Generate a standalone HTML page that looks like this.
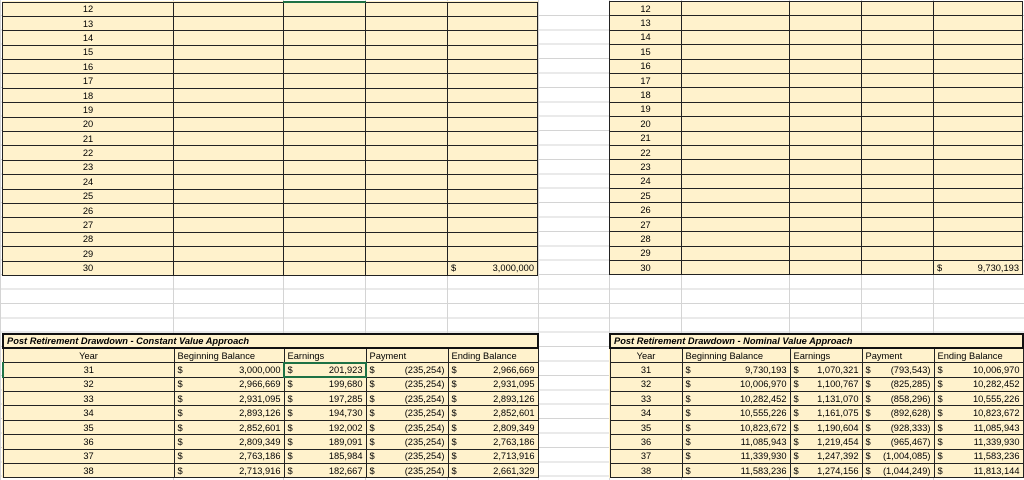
<!DOCTYPE html>
<html><head><meta charset="utf-8"><style>
*{margin:0;padding:0;box-sizing:border-box}
body{width:1024px;height:480px;overflow:hidden;background:#fff;position:relative;font-family:"Liberation Sans",sans-serif;font-size:9.3px;color:#000;
background-image:repeating-linear-gradient(to bottom,transparent 0,transparent 13.4px,#d4d4d4 13.4px,#d4d4d4 14.4px);background-position:0 1.5px}
.v{position:absolute;top:0;height:480px;width:1px;background:#d4d4d4}
table{position:absolute;border-collapse:collapse;table-layout:fixed;background:#fff2cc}
td{border:1px solid #222;height:14.4px;padding:0 3px;white-space:nowrap;overflow:hidden;line-height:12px}
td.c{text-align:center}
.m{display:flex;justify-content:space-between}
.t td{border:2px solid #111;font-weight:bold;font-style:italic;padding-left:3px}
.sel{outline:2px solid #1e7145;outline-offset:-1px}
</style></head><body>
<div class="v" style="left:0"></div>
<div class="v" style="left:538px"></div>
<div class="v" style="left:609px"></div>
<div class="v" style="left:173px"></div><div class="v" style="left:283px"></div><div class="v" style="left:365px"></div><div class="v" style="left:447px"></div>
<div class="v" style="left:681px"></div><div class="v" style="left:789px"></div><div class="v" style="left:861px"></div><div class="v" style="left:933px"></div>

<table style="left:2px;top:1px;width:535px">
<colgroup><col style="width:171px"><col style="width:110px"><col style="width:82px"><col style="width:82px"><col style="width:90px"></colgroup>
<tr><td class="c">12</td><td></td><td style="border-top:2px solid #1e7145"></td><td></td><td></td></tr>
<tr><td class="c">13</td><td></td><td></td><td></td><td></td></tr>
<tr><td class="c">14</td><td></td><td></td><td></td><td></td></tr>
<tr><td class="c">15</td><td></td><td></td><td></td><td></td></tr>
<tr><td class="c">16</td><td></td><td></td><td></td><td></td></tr>
<tr><td class="c">17</td><td></td><td></td><td></td><td></td></tr>
<tr><td class="c">18</td><td></td><td></td><td></td><td></td></tr>
<tr><td class="c">19</td><td></td><td></td><td></td><td></td></tr>
<tr><td class="c">20</td><td></td><td></td><td></td><td></td></tr>
<tr><td class="c">21</td><td></td><td></td><td></td><td></td></tr>
<tr><td class="c">22</td><td></td><td></td><td></td><td></td></tr>
<tr><td class="c">23</td><td></td><td></td><td></td><td></td></tr>
<tr><td class="c">24</td><td></td><td></td><td></td><td></td></tr>
<tr><td class="c">25</td><td></td><td></td><td></td><td></td></tr>
<tr><td class="c">26</td><td></td><td></td><td></td><td></td></tr>
<tr><td class="c">27</td><td></td><td></td><td></td><td></td></tr>
<tr><td class="c">28</td><td></td><td></td><td></td><td></td></tr>
<tr><td class="c">29</td><td></td><td></td><td></td><td></td></tr>
<tr><td class="c">30</td><td></td><td></td><td></td><td><div class="m"><span>$</span><span>3,000,000</span></div></td></tr>
</table>

<table style="left:609px;top:1px;width:413px">
<colgroup><col style="width:72px"><col style="width:108px"><col style="width:72px"><col style="width:72px"><col style="width:89px"></colgroup>
<tr><td class="c">12</td><td></td><td></td><td></td><td></td></tr>
<tr><td class="c">13</td><td></td><td></td><td></td><td></td></tr>
<tr><td class="c">14</td><td></td><td></td><td></td><td></td></tr>
<tr><td class="c">15</td><td></td><td></td><td></td><td></td></tr>
<tr><td class="c">16</td><td></td><td></td><td></td><td></td></tr>
<tr><td class="c">17</td><td></td><td></td><td></td><td></td></tr>
<tr><td class="c">18</td><td></td><td></td><td></td><td></td></tr>
<tr><td class="c">19</td><td></td><td></td><td></td><td></td></tr>
<tr><td class="c">20</td><td></td><td></td><td></td><td></td></tr>
<tr><td class="c">21</td><td></td><td></td><td></td><td></td></tr>
<tr><td class="c">22</td><td></td><td></td><td></td><td></td></tr>
<tr><td class="c">23</td><td></td><td></td><td></td><td></td></tr>
<tr><td class="c">24</td><td></td><td></td><td></td><td></td></tr>
<tr><td class="c">25</td><td></td><td></td><td></td><td></td></tr>
<tr><td class="c">26</td><td></td><td></td><td></td><td></td></tr>
<tr><td class="c">27</td><td></td><td></td><td></td><td></td></tr>
<tr><td class="c">28</td><td></td><td></td><td></td><td></td></tr>
<tr><td class="c">29</td><td></td><td></td><td></td><td></td></tr>
<tr><td class="c">30</td><td></td><td></td><td></td><td><div class="m"><span>$</span><span>9,730,193</span></div></td></tr>
</table>

<table style="left:2px;top:333px;width:535px">
<colgroup><col style="width:171px"><col style="width:110px"><col style="width:82px"><col style="width:82px"><col style="width:90px"></colgroup>
<tr class="t"><td colspan="5">Post Retirement Drawdown - Constant Value Approach</td></tr>
<tr><td class="c">Year</td><td>Beginning Balance</td><td>Earnings</td><td>Payment</td><td>Ending Balance</td></tr>
<tr><td class="c" style="border-left:2px solid #1e7145">31</td><td><div class="m"><span>$</span><span>3,000,000</span></div></td><td class="sel"><div class="m"><span>$</span><span>201,923</span></div></td><td><div class="m"><span>$</span><span>(235,254)</span></div></td><td><div class="m"><span>$</span><span>2,966,669</span></div></td></tr>
<tr><td class="c">32</td><td><div class="m"><span>$</span><span>2,966,669</span></div></td><td><div class="m"><span>$</span><span>199,680</span></div></td><td><div class="m"><span>$</span><span>(235,254)</span></div></td><td><div class="m"><span>$</span><span>2,931,095</span></div></td></tr>
<tr><td class="c">33</td><td><div class="m"><span>$</span><span>2,931,095</span></div></td><td><div class="m"><span>$</span><span>197,285</span></div></td><td><div class="m"><span>$</span><span>(235,254)</span></div></td><td><div class="m"><span>$</span><span>2,893,126</span></div></td></tr>
<tr><td class="c">34</td><td><div class="m"><span>$</span><span>2,893,126</span></div></td><td><div class="m"><span>$</span><span>194,730</span></div></td><td><div class="m"><span>$</span><span>(235,254)</span></div></td><td><div class="m"><span>$</span><span>2,852,601</span></div></td></tr>
<tr><td class="c">35</td><td><div class="m"><span>$</span><span>2,852,601</span></div></td><td><div class="m"><span>$</span><span>192,002</span></div></td><td><div class="m"><span>$</span><span>(235,254)</span></div></td><td><div class="m"><span>$</span><span>2,809,349</span></div></td></tr>
<tr><td class="c">36</td><td><div class="m"><span>$</span><span>2,809,349</span></div></td><td><div class="m"><span>$</span><span>189,091</span></div></td><td><div class="m"><span>$</span><span>(235,254)</span></div></td><td><div class="m"><span>$</span><span>2,763,186</span></div></td></tr>
<tr><td class="c">37</td><td><div class="m"><span>$</span><span>2,763,186</span></div></td><td><div class="m"><span>$</span><span>185,984</span></div></td><td><div class="m"><span>$</span><span>(235,254)</span></div></td><td><div class="m"><span>$</span><span>2,713,916</span></div></td></tr>
<tr><td class="c">38</td><td><div class="m"><span>$</span><span>2,713,916</span></div></td><td><div class="m"><span>$</span><span>182,667</span></div></td><td><div class="m"><span>$</span><span>(235,254)</span></div></td><td><div class="m"><span>$</span><span>2,661,329</span></div></td></tr>
</table>

<table style="left:609px;top:333px;width:413px">
<colgroup><col style="width:72px"><col style="width:108px"><col style="width:72px"><col style="width:72px"><col style="width:89px"></colgroup>
<tr class="t"><td colspan="5">Post Retirement Drawdown - Nominal Value Approach</td></tr>
<tr><td class="c">Year</td><td>Beginning Balance</td><td>Earnings</td><td>Payment</td><td>Ending Balance</td></tr>
<tr><td class="c">31</td><td><div class="m"><span>$</span><span>9,730,193</span></div></td><td><div class="m"><span>$</span><span>1,070,321</span></div></td><td><div class="m"><span>$</span><span>(793,543)</span></div></td><td><div class="m"><span>$</span><span>10,006,970</span></div></td></tr>
<tr><td class="c">32</td><td><div class="m"><span>$</span><span>10,006,970</span></div></td><td><div class="m"><span>$</span><span>1,100,767</span></div></td><td><div class="m"><span>$</span><span>(825,285)</span></div></td><td><div class="m"><span>$</span><span>10,282,452</span></div></td></tr>
<tr><td class="c">33</td><td><div class="m"><span>$</span><span>10,282,452</span></div></td><td><div class="m"><span>$</span><span>1,131,070</span></div></td><td><div class="m"><span>$</span><span>(858,296)</span></div></td><td><div class="m"><span>$</span><span>10,555,226</span></div></td></tr>
<tr><td class="c">34</td><td><div class="m"><span>$</span><span>10,555,226</span></div></td><td><div class="m"><span>$</span><span>1,161,075</span></div></td><td><div class="m"><span>$</span><span>(892,628)</span></div></td><td><div class="m"><span>$</span><span>10,823,672</span></div></td></tr>
<tr><td class="c">35</td><td><div class="m"><span>$</span><span>10,823,672</span></div></td><td><div class="m"><span>$</span><span>1,190,604</span></div></td><td><div class="m"><span>$</span><span>(928,333)</span></div></td><td><div class="m"><span>$</span><span>11,085,943</span></div></td></tr>
<tr><td class="c">36</td><td><div class="m"><span>$</span><span>11,085,943</span></div></td><td><div class="m"><span>$</span><span>1,219,454</span></div></td><td><div class="m"><span>$</span><span>(965,467)</span></div></td><td><div class="m"><span>$</span><span>11,339,930</span></div></td></tr>
<tr><td class="c">37</td><td><div class="m"><span>$</span><span>11,339,930</span></div></td><td><div class="m"><span>$</span><span>1,247,392</span></div></td><td><div class="m"><span>$</span><span>(1,004,085)</span></div></td><td><div class="m"><span>$</span><span>11,583,236</span></div></td></tr>
<tr><td class="c">38</td><td><div class="m"><span>$</span><span>11,583,236</span></div></td><td><div class="m"><span>$</span><span>1,274,156</span></div></td><td><div class="m"><span>$</span><span>(1,044,249)</span></div></td><td><div class="m"><span>$</span><span>11,813,144</span></div></td></tr>
</table>
</body></html>
